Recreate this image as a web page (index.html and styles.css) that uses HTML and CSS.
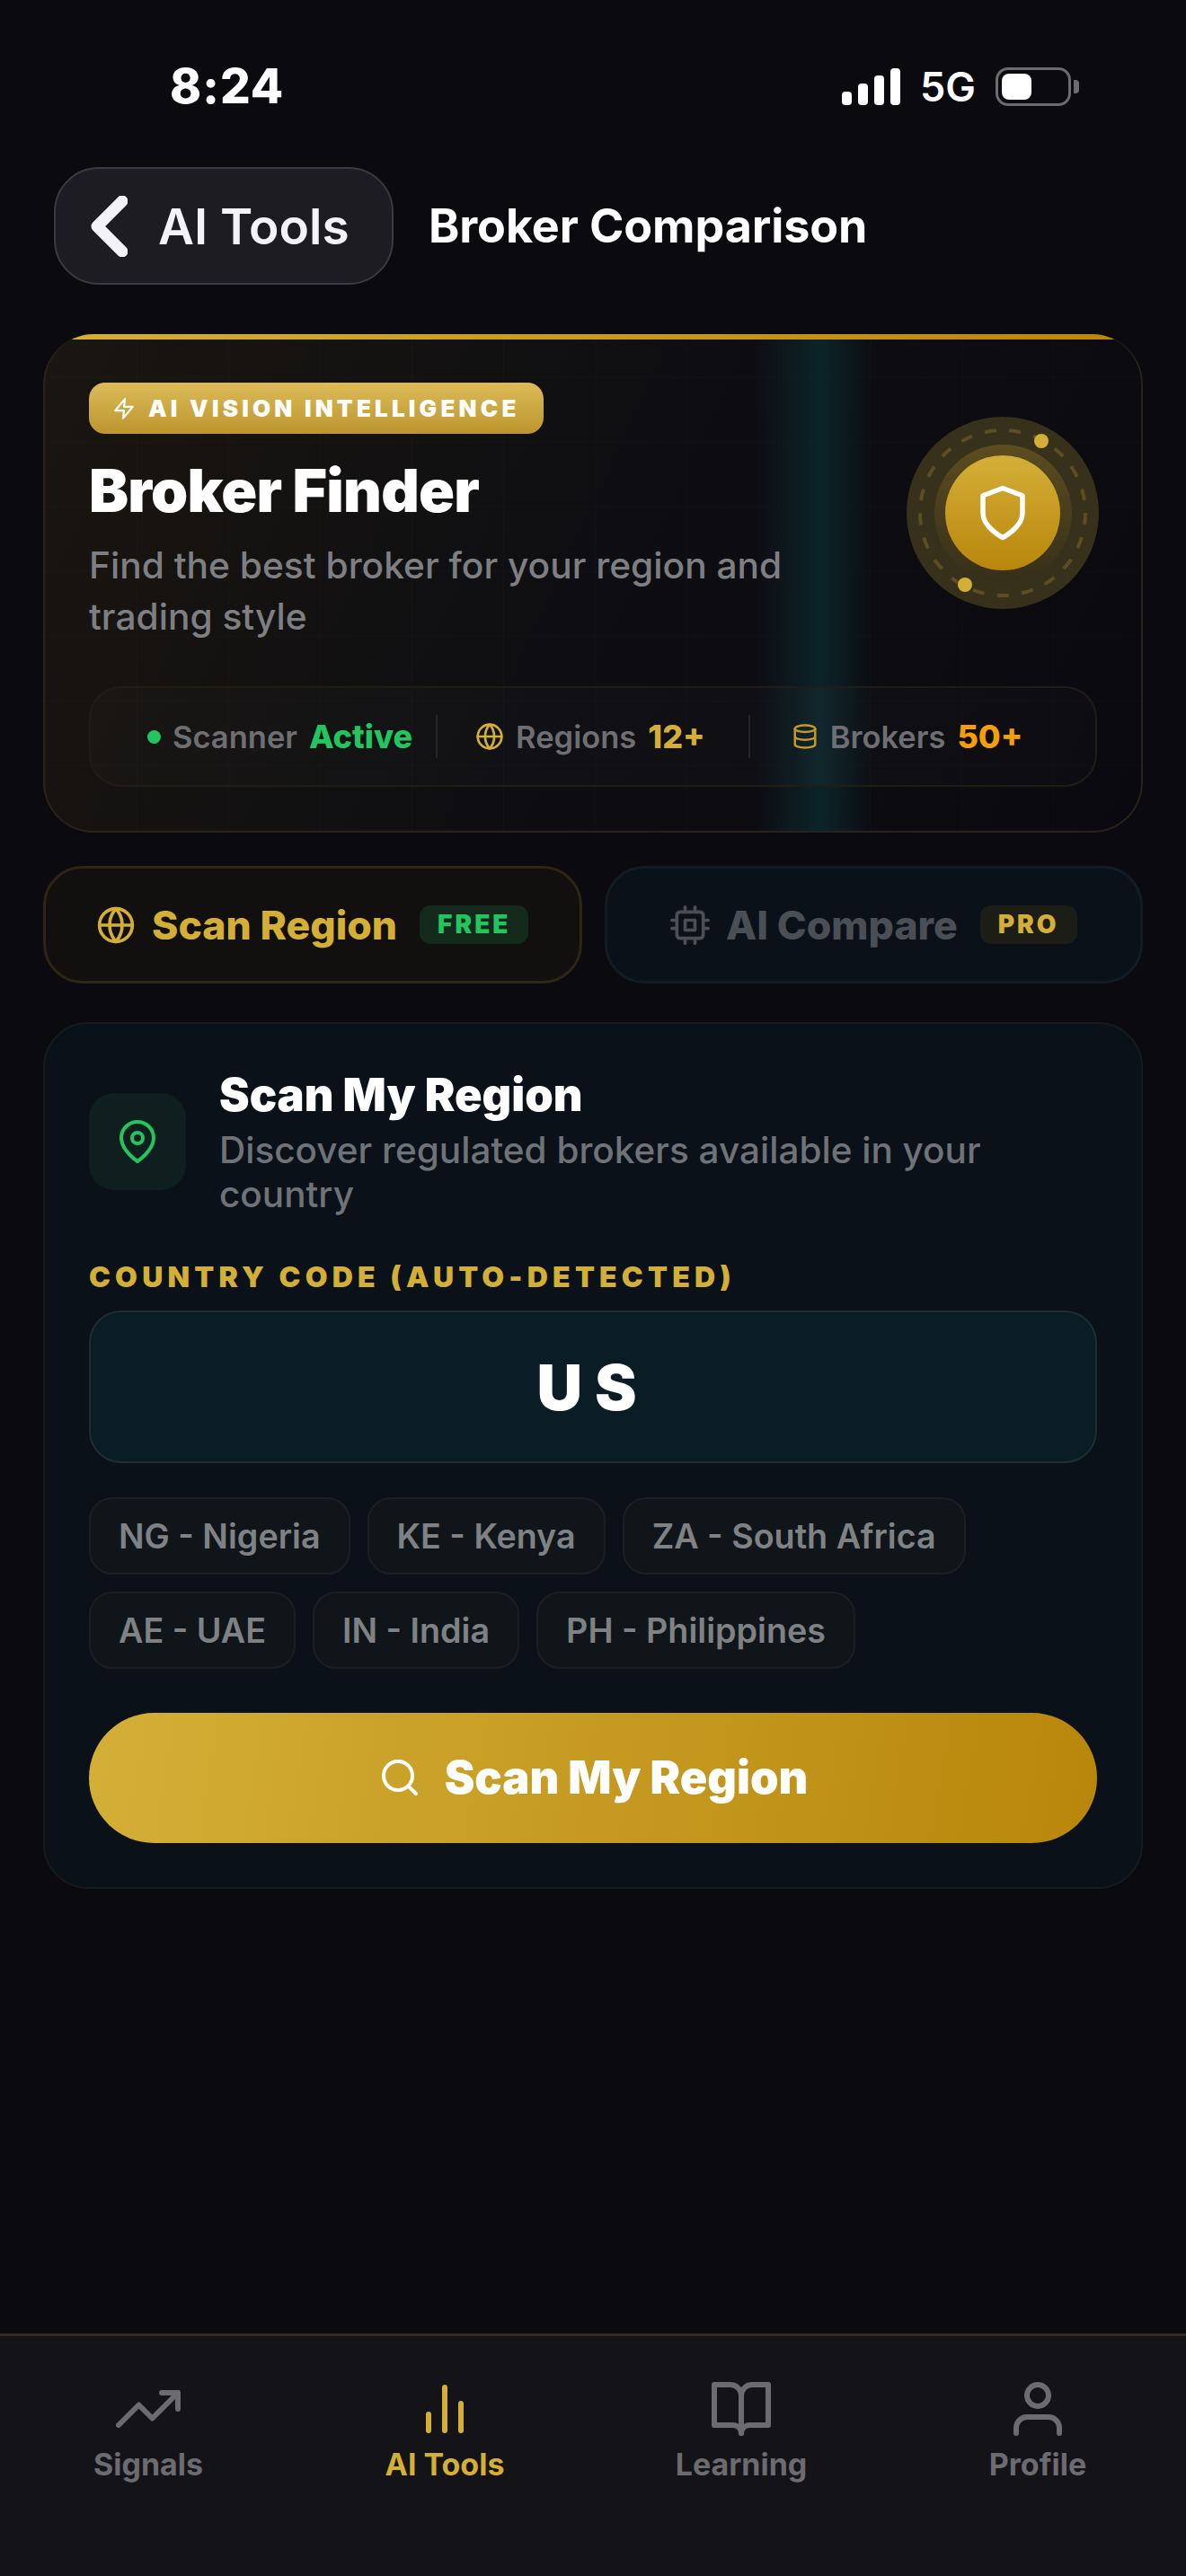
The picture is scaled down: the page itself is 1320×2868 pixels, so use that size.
FILE: index.html
```html
<!DOCTYPE html>
<html lang="en">
<head>
    <meta charset="UTF-8">
    <meta name="viewport" content="width=device-width, initial-scale=1.0">
    <title>Broker Comparison</title>
    <link rel="stylesheet" href="styles.css">
</head>
<body>
    <div class="page">
        <div class="status-bar">
            <span class="clock">8:24</span>
            <div class="status-right">
                <div class="signal"><i></i><i></i><i></i><i></i></div>
                <span class="network">5G</span>
                <div class="battery"><i></i></div>
            </div>
        </div>

        <header>
            <a class="back" href="#">
                <svg class="chevron" viewBox="0 0 41 68"><path d="M35 6 7 34l28 28"/></svg>
                <span>AI Tools</span>
            </a>
            <h1>Broker Comparison</h1>
        </header>

        <main>
            <section class="hero">
                <div class="hero-top">
                    <div class="hero-text">
                        <div class="badge">
                            <svg class="icon" viewBox="0 0 24 24"><path d="M13 2 3 14h9l-1 8 10-12h-9z"/></svg>
                            <span>AI VISION INTELLIGENCE</span>
                        </div>
                        <h2>Broker Finder</h2>
                        <p>Find the best broker for your region and trading style</p>
                    </div>
                    <div class="orbit">
                        <div class="orbit-mid"></div>
                        <svg class="orbit-dash" viewBox="0 0 214 214"><circle cx="107" cy="107" r="92"/></svg>
                        <div class="orbit-core">
                            <svg class="icon" viewBox="0 0 24 24"><path d="M12 22s8-4 8-10V5l-8-3-8 3v7c0 6 8 10 8 10z"/></svg>
                        </div>
                        <i class="orbit-dot dot-a"></i>
                        <i class="orbit-dot dot-b"></i>
                    </div>
                </div>
                <div class="stats">
                    <div class="stat">
                        <i class="live-dot"></i>
                        <span>Scanner</span>
                        <b class="green">Active</b>
                    </div>
                    <div class="stat-divider first"></div>
                    <div class="stat">
                        <svg class="icon gold" viewBox="0 0 24 24"><circle cx="12" cy="12" r="10"/><path d="M2 12h20M12 2a15 15 0 0 1 0 20 15 15 0 0 1 0-20z"/></svg>
                        <span>Regions</span>
                        <b class="gold">12+</b>
                    </div>
                    <div class="stat-divider"></div>
                    <div class="stat">
                        <svg class="icon db" viewBox="0 0 24 24"><ellipse cx="12" cy="5" rx="9" ry="3"/><path d="M3 5v14a9 3 0 0 0 18 0V5M3 12a9 3 0 0 0 18 0"/></svg>
                        <span>Brokers</span>
                        <b class="orange">50+</b>
                    </div>
                </div>
            </section>

            <div class="tabs">
                <button class="tab active">
                    <svg class="icon" viewBox="0 0 24 24"><circle cx="12" cy="12" r="10"/><path d="M2 12h20M12 2a15 15 0 0 1 0 20 15 15 0 0 1 0-20z"/></svg>
                    <span>Scan Region</span>
                    <em class="free">FREE</em>
                </button>
                <button class="tab">
                    <svg class="icon" viewBox="0 0 24 24"><rect x="4" y="4" width="16" height="16" rx="2"/><rect x="9" y="9" width="6" height="6"/><path d="M9 1v3M15 1v3M9 20v3M15 20v3M20 9h3M20 14h3M1 9h3M1 14h3"/></svg>
                    <span>AI Compare</span>
                    <em class="pro">PRO</em>
                </button>
            </div>

            <section class="panel">
                <div class="panel-head">
                    <div class="pin-tile">
                        <svg class="icon" viewBox="0 0 24 24"><path d="M21 10c0 7-9 13-9 13s-9-6-9-13a9 9 0 0 1 18 0z"/><circle cx="12" cy="10" r="3"/></svg>
                    </div>
                    <div>
                        <h3>Scan My Region</h3>
                        <p>Discover regulated brokers available in your country</p>
                    </div>
                </div>
                <label for="countryCode">COUNTRY CODE (AUTO-DETECTED)</label>
                <input type="text" id="countryCode" value="US">
                <div class="chips">
                    <a href="#">NG - Nigeria</a>
                    <a href="#">KE - Kenya</a>
                    <a href="#">ZA - South Africa</a>
                    <a href="#">AE - UAE</a>
                    <a href="#">IN - India</a>
                    <a href="#">PH - Philippines</a>
                </div>
                <button class="scan-btn">
                    <svg class="icon" viewBox="0 0 24 24"><circle cx="11" cy="11" r="8"/><path d="m21 21-4.35-4.35"/></svg>
                    <span>Scan My Region</span>
                </button>
            </section>
        </main>

        <nav>
            <a href="#">
                <svg class="icon" viewBox="0 0 24 24"><path d="m23 6-9.5 9.5-5-5L1 18"/><path d="M17 6h6v6"/></svg>
                <span>Signals</span>
            </a>
            <a href="#" class="current">
                <svg class="icon" viewBox="0 0 24 24"><path d="M18 20V10M12 20V4M6 20v-6"/></svg>
                <span>AI Tools</span>
            </a>
            <a href="#">
                <svg class="icon" viewBox="0 0 24 24"><path d="M2 3h6a4 4 0 0 1 4 4v14a3 3 0 0 0-3-3H2z"/><path d="M22 3h-6a4 4 0 0 0-4 4v14a3 3 0 0 1 3-3h7z"/></svg>
                <span>Learning</span>
            </a>
            <a href="#">
                <svg class="icon" viewBox="0 0 24 24"><path d="M20 21v-2a4 4 0 0 0-4-4H8a4 4 0 0 0-4 4v2"/><circle cx="12" cy="7" r="4"/></svg>
                <span>Profile</span>
            </a>
        </nav>
    </div>
</body>
</html>
```

FILE: styles.css
```css
* {
    margin: 0;
    padding: 0;
    box-sizing: border-box;
    font-family: Inter, "Liberation Sans", sans-serif;
}

body {
    background-color: #0a0a0f;
    color: #fff;
}

a {
    text-decoration: none;
    color: inherit;
}

.icon {
    fill: none;
    stroke: currentColor;
    stroke-width: 2;
    stroke-linecap: round;
    stroke-linejoin: round;
    flex-shrink: 0;
}

.page {
    display: flex;
    flex-direction: column;
    min-height: 100vh;
}

/* status bar */
.status-bar {
    display: flex;
    justify-content: space-between;
    align-items: center;
    height: 186px;
    padding: 6px 128px 0 189px;
}

.clock {
    font-size: 53px;
    font-weight: 800;
    letter-spacing: 1px;
}

.status-right {
    display: flex;
    align-items: center;
    gap: 22px;
}

.signal {
    display: flex;
    align-items: flex-end;
    gap: 7px;
    height: 41px;
}

.signal i {
    width: 11px;
    border-radius: 4px;
    background-color: #fff;
}

.signal i:nth-child(1) { height: 15px; }
.signal i:nth-child(2) { height: 24px; }
.signal i:nth-child(3) { height: 33px; }
.signal i:nth-child(4) { height: 41px; }

.network {
    font-size: 45px;
    font-weight: 600;
}

.battery {
    position: relative;
    width: 84px;
    height: 43px;
    padding: 4px;
    border: 3px solid #6c6c6e;
    border-radius: 14px;
}

.battery i {
    display: block;
    width: 33px;
    height: 29px;
    border-radius: 8px;
    background-color: #fff;
}

.battery::after {
    content: "";
    position: absolute;
    top: 11px;
    right: -12px;
    width: 6px;
    height: 15px;
    border-radius: 0 4px 4px 0;
    background-color: #6c6c6e;
}

/* header */
header {
    display: flex;
    align-items: center;
    gap: 39px;
    padding: 0 60px;
    margin-bottom: 55px;
}

.back {
    display: flex;
    align-items: center;
    gap: 34px;
    width: 378px;
    height: 131px;
    padding-left: 39px;
    background-color: #1c1c22;
    border: 2px solid #3a3a44;
    border-radius: 50px;
    color: #f2f2f7;
    font-size: 55px;
    font-weight: 600;
}

.chevron {
    width: 41px;
    height: 68px;
    fill: none;
    stroke: #f2f2f7;
    stroke-width: 13;
    stroke-linecap: round;
    stroke-linejoin: round;
}

header h1 {
    font-size: 52px;
    font-weight: 700;
    letter-spacing: -0.1px;
}

main {
    padding: 0 48px;
}

/* hero card */
.hero {
    position: relative;
    height: 555px;
    padding: 52px 49px 0;
    overflow: hidden;
    border: 2px solid #29231a;
    border-top: 0;
    border-radius: 56px;
    background:
        linear-gradient(90deg, transparent 790px, #0d2329 860px, #0d2329 866px, transparent 922px),
        repeating-linear-gradient(90deg, rgba(212, 175, 55, 0.025) 0 1px, transparent 1px 102px),
        repeating-linear-gradient(0deg, rgba(212, 175, 55, 0.02) 0 1px, transparent 1px 72px),
        linear-gradient(115deg, #1a1610 0%, #0e0e12 50%, #09090f 100%);
}

.hero::before {
    content: "";
    position: absolute;
    top: 0;
    left: 0;
    right: 0;
    height: 6px;
    background: linear-gradient(90deg, #d4af37, #b8860b);
}

.hero-top {
    display: flex;
    justify-content: space-between;
    height: 289px;
    padding-top: 2px;
}

.badge {
    display: inline-flex;
    align-items: center;
    gap: 14px;
    height: 57px;
    padding: 0 26px;
    border-radius: 18px;
    background: linear-gradient(180deg, #dcbb58, #bc952e);
    font-size: 26px;
    font-weight: 900;
    letter-spacing: 4.2px;
}

.badge .icon {
    width: 26px;
    height: 26px;
}

.hero-text h2 {
    margin-top: 25px;
    font-size: 66px;
    line-height: 76px;
    font-weight: 900;
    letter-spacing: -0.8px;
}

.hero-text p {
    width: 800px;
    margin-top: 17px;
    font-size: 40.7px;
    line-height: 57px;
    font-weight: 500;
    color: #7d7f83;
}

/* shield with rings, stacked in one grid cell */
.orbit {
    position: relative;
    display: grid;
    place-items: center;
    width: 214px;
    height: 214px;
    margin: 38px -2px 0 0;
    border-radius: 50%;
    background-color: #37301b;
}

.orbit > * {
    grid-area: 1 / 1;
}

.orbit-mid {
    width: 153px;
    height: 153px;
    border-radius: 50%;
    background: linear-gradient(180deg, #5c4d20, #362e19);
}

.orbit-dash {
    width: 214px;
    height: 214px;
    fill: none;
    stroke: #5c4d22;
    stroke-width: 4;
    stroke-dasharray: 13 14.5;
}

.orbit-core {
    display: flex;
    align-items: center;
    justify-content: center;
    width: 128px;
    height: 128px;
    border-radius: 50%;
    background: linear-gradient(180deg, #d4af37, #b8860b);
}

.orbit-core .icon {
    width: 66px;
    height: 66px;
}

.orbit-dot {
    position: absolute;
    width: 16px;
    height: 16px;
    border-radius: 50%;
    background-color: #d4af37;
}

.dot-a {
    top: 19px;
    left: 142px;
}

.dot-b {
    top: 179px;
    left: 57px;
}

/* stats strip */
.stats {
    display: flex;
    align-items: center;
    height: 112px;
    margin-top: 51px;
    padding-left: 63px;
    background-color: rgba(255, 255, 255, 0.015);
    border: 2px solid #211d15;
    border-radius: 36px;
}

.stat {
    display: flex;
    align-items: center;
    gap: 13px;
    font-size: 34.5px;
    font-weight: 600;
    color: #6d6f72;
}

.stat b {
    font-size: 36px;
    font-weight: 800;
}

.stat .icon {
    width: 32px;
    height: 32px;
}

.stat .icon.db {
    width: 30px;
    height: 30px;
    color: #c9981f;
}

.green { color: #22c55e; }
.gold { color: #d4af37; }
.orange { color: #f59e0b; }

.live-dot {
    width: 15px;
    height: 15px;
    border-radius: 50%;
    background-color: #22c55e;
}

.stat-divider {
    width: 2px;
    height: 48px;
    margin: 0 46px 0 48px;
    background-color: #24252a;
}

.stat-divider.first {
    margin: 0 42px 0 26px;
}

/* tabs */
.tabs {
    display: flex;
    gap: 25px;
    margin-top: 37px;
}

.tab {
    flex: 1;
    display: flex;
    align-items: center;
    justify-content: center;
    gap: 18px;
    height: 131px;
    background-color: #0b1118;
    border: 3px solid #131c24;
    border-radius: 44px;
    color: #4a4f55;
    font-size: 44.5px;
    font-weight: 800;
}

.tab.active {
    background-color: #12100e;
    border-color: #2d2613;
    color: #d4af37;
}

.tab .icon {
    width: 44px;
    height: 44px;
}

.tab em {
    margin-left: 7px;
    height: 43px;
    padding: 0 20px;
    border-radius: 12px;
    font-style: normal;
    font-size: 28px;
    line-height: 43px;
    font-weight: 900;
    letter-spacing: 3px;
}

.free {
    background-color: #13291c;
    color: #22c55e;
}

.pro {
    background-color: #1c1d16;
    color: #d4af37;
}

/* scan panel */
.panel {
    display: flex;
    flex-direction: column;
    margin-top: 43px;
    height: 965px;
    padding: 50px 49px 0;
    background-color: #0a1118;
    border: 2px solid #161b1e;
    border-radius: 50px;
}

.panel-head {
    display: flex;
    align-items: center;
    gap: 37px;
}

.pin-tile {
    display: flex;
    align-items: center;
    justify-content: center;
    flex-shrink: 0;
    width: 108px;
    height: 108px;
    margin-top: -2px;
    border-radius: 28px;
    background-color: #0f1e1e;
    color: #22c55e;
}

.pin-tile .icon {
    width: 48px;
    height: 48px;
}

.panel-head h3 {
    font-size: 50.5px;
    line-height: 58px;
    font-weight: 900;
}

.panel-head p {
    margin-top: 8px;
    font-size: 40.5px;
    line-height: 49px;
    font-weight: 500;
    color: #6f7378;
}

.panel label {
    margin-top: 48px;
    font-size: 32px;
    line-height: 40px;
    font-weight: 900;
    letter-spacing: 5.2px;
    color: #d4af37;
}

.panel input {
    width: 100%;
    height: 170px;
    margin-top: 17px;
    background-color: #0a1c24;
    border: 2px solid #1e2f33;
    border-radius: 36px;
    color: #fff;
    font-size: 70px;
    font-weight: 900;
    letter-spacing: 14px;
    text-align: center;
    outline: none;
}

.chips {
    display: flex;
    flex-wrap: wrap;
    gap: 19px;
    margin-top: 38px;
}

.chips a {
    display: flex;
    align-items: center;
    height: 86px;
    padding: 0 31px;
    background-color: #101519;
    border: 2px solid #1a1f22;
    border-radius: 26px;
    color: #7f8285;
    font-size: 37.7px;
    font-weight: 600;
}

.scan-btn {
    display: flex;
    align-items: center;
    justify-content: center;
    gap: 26px;
    width: 100%;
    height: 145px;
    margin-top: 49px;
    padding-bottom: 2px;
    border: 0;
    border-radius: 73px;
    background: linear-gradient(100deg, #d4af37, #b8860b);
    color: #fff;
    font-size: 50.5px;
    font-weight: 900;
}

.scan-btn .icon {
    width: 48px;
    height: 48px;
}

/* bottom nav */
nav {
    display: grid;
    grid-template-columns: repeat(4, 1fr);
    height: 270px;
    margin-top: auto;
    padding-top: 45px;
    background-color: #141418;
    border-top: 3px solid #352c18;
}

nav a {
    display: flex;
    flex-direction: column;
    align-items: center;
    gap: 5px;
    color: #6b6b70;
    font-size: 34px;
    font-weight: 700;
}

nav a.current {
    color: #d4af37;
}

nav .icon {
    width: 72px;
    height: 72px;
}
```
